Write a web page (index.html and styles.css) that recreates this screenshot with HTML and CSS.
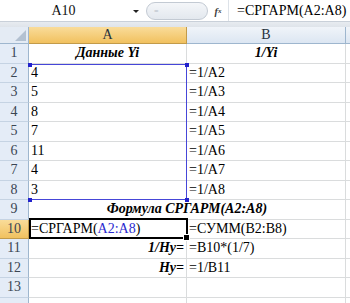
FILE: index.html
```html
<!DOCTYPE html>
<html>
<head>
<meta charset="utf-8">
<link rel="stylesheet" href="styles.css">
</head>
<body>
<div class="fbar">
  <div class="namebox"><span class="ref">A10</span><span class="arrow"></span></div>
  <div class="pill"><span class="dot">=</span></div>
  <div class="fx">f<sub>x</sub></div>
  <div class="formula">=СРГАРМ(A2:A8)</div>
</div>
<div class="strip"></div>
<div class="sheet">
  <div class="corner"><span class="tri"></span></div>
  <div class="colhd sel">A</div>
  <div class="colhd">B</div>
  <div class="colhd"></div>

  <div class="rowhd">1</div><div class="cell c bi">Данные Yi</div><div class="cell c bi">1/Yi</div><div class="cell"></div>
  <div class="rowhd">2</div><div class="cell">4</div><div class="cell">=1/A2</div><div class="cell"></div>
  <div class="rowhd">3</div><div class="cell">5</div><div class="cell">=1/A3</div><div class="cell"></div>
  <div class="rowhd">4</div><div class="cell">8</div><div class="cell">=1/A4</div><div class="cell"></div>
  <div class="rowhd">5</div><div class="cell">7</div><div class="cell">=1/A5</div><div class="cell"></div>
  <div class="rowhd">6</div><div class="cell">11</div><div class="cell">=1/A6</div><div class="cell"></div>
  <div class="rowhd">7</div><div class="cell">4</div><div class="cell">=1/A7</div><div class="cell"></div>
  <div class="rowhd">8</div><div class="cell">3</div><div class="cell">=1/A8</div><div class="cell"></div>
  <div class="rowhd">9</div><div class="cell c bi span2">Формула СРГАРМ(A2:A8)</div><div class="cell"></div>
  <div class="rowhd sel">10</div><div class="cell">=СРГАРМ(<span class="blue">A2:A8</span>)</div><div class="cell">=СУММ(B2:B8)</div><div class="cell"></div>
  <div class="rowhd">11</div><div class="cell r bi">1/Hy=</div><div class="cell">=B10*(1/7)</div><div class="cell"></div>
  <div class="rowhd">12</div><div class="cell r bi">Hy=</div><div class="cell">=1/B11</div><div class="cell"></div>
  <div class="rowhd">13</div><div class="cell"></div><div class="cell"></div><div class="cell"></div>
  <div class="rowhd"></div><div class="cell"></div><div class="cell"></div><div class="cell"></div>

  <div class="range">
    <span class="h tl"></span><span class="h tr"></span><span class="h bl"></span><span class="h br"></span>
  </div>
  <div class="active"><span class="fill"></span></div>
</div>
</body>
</html>
```

FILE: styles.css
```css
html, body {
  margin: 0;
  padding: 0;
  background: #ffffff;
  overflow: hidden;
}
body {
  width: 350px;
  height: 303px;
  font-family: "Liberation Serif", "Times New Roman", serif;
  font-size: 14px;
  color: #000;
}
.fbar {
  height: 21px;
  display: flex;
  align-items: stretch;
  background: #ffffff;
  position: relative;
}
.namebox {
  width: 144px;
  display: flex;
  align-items: center;
  background: #fff;
  position: relative;
}
.namebox .ref {
  flex: 1;
  text-align: center;
  font-size: 14px;
  padding-right: 6px;
  color: #111;
}
.namebox .arrow {
  width: 0;
  height: 0;
  border-left: 3px solid transparent;
  border-right: 3px solid transparent;
  border-top: 3px solid #222;
  margin-right: 5px;
  margin-top: 2px;
}
.pill {
  width: 60px;
  margin: 2px 0 1px 2px;
  border: 1px solid #c3cad3;
  border-radius: 10px;
  background: linear-gradient(#f4f6f9, #e3e8ee);
  display: flex;
  align-items: center;
}
.pill .dot {
  font-size: 8px;
  color: #b5bcc6;
  margin-left: 7px;
}
.fx {
  width: 20px;
  font-style: italic;
  font-weight: bold;
  font-size: 10px;
  color: #3a3a3a;
  display: flex;
  align-items: center;
  justify-content: center;
  padding-top: 1px;
}
.fx sub {
  font-size: 7px;
  vertical-align: -1px;
}
.formula {
  flex: 1;
  background: #fff;
  padding-left: 8px;
  display: flex;
  align-items: center;
  white-space: nowrap;
  overflow: hidden;
  border-left: 1px solid #dde2e8;
}
.strip {
  height: 6px;
  background: linear-gradient(#e7ebf0, #dfe4ea);
  border-top: 1px solid #c9d0d9;
  box-sizing: border-box;
}
.sheet {
  position: relative;
  display: grid;
  grid-template-columns: 29px 158px 159px 1fr;
  grid-template-rows: 17px repeat(14, 19.5px);
}
.corner {
  background: #e4ebf4;
  border-right: 1px solid #9eb6ce;
  border-bottom: 1px solid #9eb6ce;
  box-sizing: border-box;
  position: relative;
}
.corner .tri {
  position: absolute;
  right: 2px;
  bottom: 2px;
  width: 0;
  height: 0;
  border-left: 11px solid transparent;
  border-bottom: 11px solid #b3c1d1;
}
.colhd {
  background: linear-gradient(#f0f4f9, #dce6f2);
  border-right: 1px solid #9eb6ce;
  border-bottom: 1px solid #9eb6ce;
  box-sizing: border-box;
  display: flex;
  align-items: center;
  justify-content: center;
  font-size: 14px;
  color: #27313d;
}
.colhd.sel {
  background: linear-gradient(#f9dc9a, #f1c15f);
  border-bottom: 1px solid #c29b4a;
  border-right: 1px solid #c29b4a;
}
.rowhd {
  background: #e4ecf7;
  border-right: 1px solid #9eb6ce;
  border-bottom: 1px solid #c5d3e3;
  box-sizing: border-box;
  display: flex;
  align-items: center;
  justify-content: center;
  font-size: 14px;
  color: #3a4553;
}
.rowhd.sel {
  background: linear-gradient(#f9dc9a, #f1c15f);
  border-bottom: 1px solid #c29b4a;
  border-right: 1px solid #c29b4a;
}
.cell {
  border-right: 1px solid #dadcdd;
  border-bottom: 1px solid #dadcdd;
  box-sizing: border-box;
  display: flex;
  align-items: center;
  padding: 0 2px;
  white-space: nowrap;
  overflow: visible;
}
.cell.c { justify-content: center; }
.cell.r { justify-content: flex-end; }
.bi { font-weight: bold; font-style: italic; }
.span2 { grid-column: span 2; }
.blue { color: #2b2bd0; }
.range {
  position: absolute;
  left: 29px;
  top: 36.5px;
  width: 158px;
  height: 136.5px;
  border-top: 1px solid #4646d8;
  border-right: 1px solid #4646d8;
  border-bottom: 1px solid #4646d8;
  box-sizing: border-box;
}
.range .h {
  position: absolute;
  width: 4px;
  height: 4px;
  background: #2222cc;
}
.range .tl { left: -1px; top: -2px; }
.range .tr { right: -3px; top: -2px; }
.range .bl { left: -1px; bottom: -3px; }
.range .br { right: -3px; bottom: -3px; }
.active {
  position: absolute;
  left: 29px;
  top: 191px;
  width: 159px;
  height: 21px;
  border: 2px solid #000;
  box-sizing: border-box;
}
.active .fill {
  position: absolute;
  right: -4px;
  bottom: -4px;
  width: 5px;
  height: 5px;
  background: #000;
  border: 1px solid #fff;
}
```
